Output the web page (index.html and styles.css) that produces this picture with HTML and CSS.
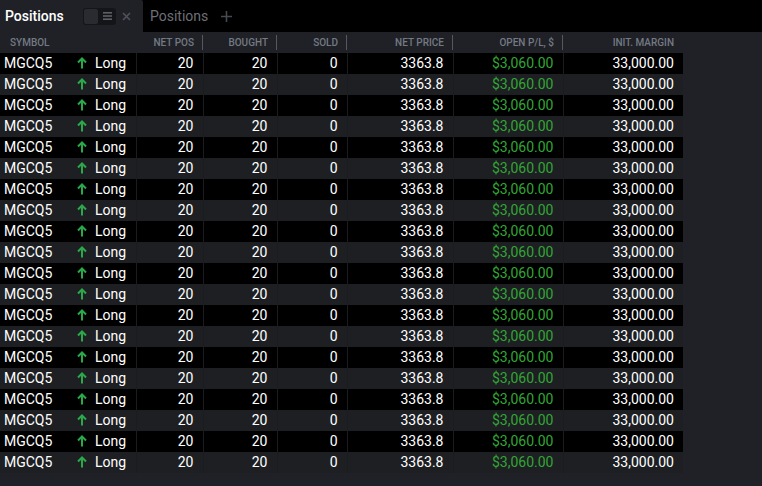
FILE: index.html
```html
<!DOCTYPE html>
<html lang="en">
<head>
    <meta charset="UTF-8">
    <meta name="viewport" content="width=device-width, initial-scale=1.0">
    <title>Positions</title>
    <link rel="stylesheet" href="styles.css">
</head>
<body>
    <div class="tabs">
        <div class="tab active">
            <span class="tab-title">Positions</span>
            <span class="toggle">
                <span class="toggle-knob"></span>
                <svg class="toggle-icon" width="9" height="8" viewBox="0 0 9 8">
                    <rect x="0" y="0" width="9" height="1.6" fill="#5d6067"/>
                    <rect x="0" y="3.2" width="9" height="1.6" fill="#5d6067"/>
                    <rect x="0" y="6.4" width="9" height="1.6" fill="#5d6067"/>
                </svg>
            </span>
            <svg class="close" width="9" height="9" viewBox="0 0 9 9">
                <path d="M1 1 L8 8 M8 1 L1 8" stroke="#4f5258" stroke-width="1.6"/>
            </svg>
        </div>
        <div class="tab">
            <span class="tab-title">Positions</span>
            <svg class="add" width="11" height="11" viewBox="0 0 11 11">
                <path d="M5.5 0 V11 M0 5.5 H11" stroke="#46494e" stroke-width="1.6"/>
            </svg>
        </div>
    </div>

    <table class="grid">
        <colgroup>
            <col style="width:70px">
            <col style="width:66px">
            <col style="width:67px">
            <col style="width:74px">
            <col style="width:70px">
            <col style="width:106px">
            <col style="width:110px">
            <col style="width:120px">
        </colgroup>
        <thead>
            <tr>
                <th class="left">Symbol</th>
                <th class="nodiv"></th>
                <th>Net Pos</th>
                <th>Bought</th>
                <th>Sold</th>
                <th>Net Price</th>
                <th>Open P/L, $</th>
                <th class="nodiv">Init. Margin</th>
            </tr>
        </thead>
        <tbody id="rows"></tbody>
    </table>

    <script>
        const rowsBody = document.getElementById('rows');

        const position = {
            symbol: 'MGCQ5',
            side: 'Long',
            netPos: 20,
            bought: 20,
            sold: 0,
            netPrice: '3363.8',
            openPl: '$3,060.00',
            initMargin: '33,000.00'
        };

        const arrowUp = '<svg class="arrow" width="10" height="12" viewBox="0 0 10 12">' +
            '<path d="M5 11.5 V1.5 M1 5.5 L5 1.5 L9 5.5" fill="none" stroke="#2ba84a" stroke-width="2"/></svg>';

        for (let i = 0; i < 20; i++) {
            const tr = document.createElement('tr');
            tr.innerHTML =
                `<td class="symbol">${position.symbol}</td>` +
                `<td class="side">${arrowUp}<span>${position.side}</span></td>` +
                `<td>${position.netPos}</td>` +
                `<td>${position.bought}</td>` +
                `<td>${position.sold}</td>` +
                `<td>${position.netPrice}</td>` +
                `<td class="profit">${position.openPl}</td>` +
                `<td>${position.initMargin}</td>`;
            rowsBody.appendChild(tr);
        }
    </script>
</body>
</html>
```

FILE: styles.css
```css
body {
    margin: 0;
    background-color: #202126;
    font-family: Roboto, "Liberation Sans", sans-serif;
    color: #fff;
    height: 486px;
    overflow: hidden;
}
.tabs {
    display: flex;
    height: 32px;
    background-color: #000;
}
.tab {
    display: flex;
    align-items: center;
    padding-left: 7px;
    font-size: 14px;
    color: #6d7077;
}
.tab.active {
    width: 138px;
    padding-left: 5px;
    background-color: #202126;
    border-top-right-radius: 2px;
    color: #fff;
}
.tab.active .tab-title {
    font-weight: 500;
}
.toggle {
    display: flex;
    align-items: center;
    width: 33px;
    height: 17px;
    margin-left: 19px;
    box-sizing: border-box;
    padding: 1px;
    border-radius: 3px;
    background-color: #141518;
}
.toggle-knob {
    width: 14px;
    height: 15px;
    border-radius: 2px;
    background-color: #2a2b30;
}
.toggle-icon {
    margin-left: 5px;
}
.close {
    margin-left: 6px;
}
.add {
    margin-left: 13px;
}
.grid {
    border-collapse: collapse;
    table-layout: fixed;
    width: 683px;
}
.grid tr {
    height: 21px;
}
.grid th {
    position: relative;
    height: 21px;
    padding: 0 9px 0 0;
    line-height: 21px;
    font-size: 10px;
    font-weight: 500;
    text-transform: uppercase;
    text-align: right;
    color: #737a84;
    white-space: nowrap;
}
.grid th::after {
    content: "";
    position: absolute;
    right: 0;
    top: 3px;
    width: 1px;
    height: 15px;
    background-color: #55585f;
}
.grid th.left {
    text-align: left;
    padding-left: 10px;
}
.grid th.left::after,
.grid th.nodiv::after {
    display: none;
}
.grid td {
    height: 20px;
    padding: 0 9px 1px 0;
    line-height: 20px;
    font-size: 14px;
    text-align: right;
    white-space: nowrap;
    border-right: 1px solid #1b1c20;
}
.grid tbody tr:nth-child(odd) {
    background-color: #000;
}
.grid tbody tr:nth-child(even) {
    background-color: #1e1f23;
}
.grid td.symbol {
    text-align: left;
    padding-left: 4px;
    border-right: none;
}
.grid td.side {
    text-align: left;
    padding-left: 7px;
}
.arrow {
    vertical-align: -1px;
    margin-right: 8px;
}
.grid td.profit {
    color: #31a634;
}
.grid td:last-child {
    border-right: none;
}
```
